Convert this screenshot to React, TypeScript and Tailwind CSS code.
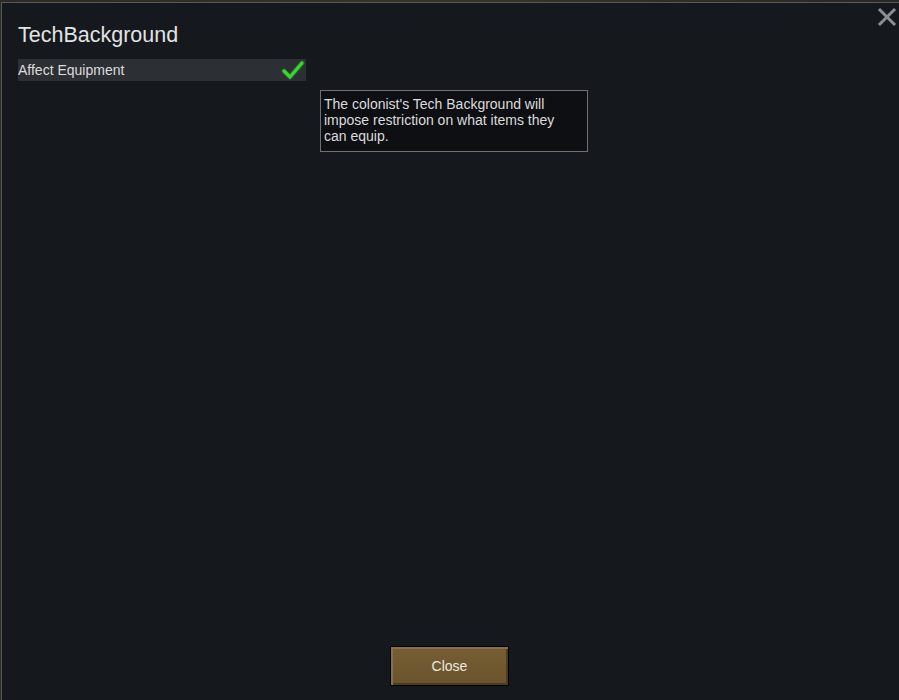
import React from 'react';

function CheckMark() {
  return (
    <svg width="24" height="20" viewBox="0 0 24 20" className="shrink-0">
      <path d="M3 11 L9 17 L21 3" fill="none" stroke="#1c6a1c" strokeWidth="5" strokeLinecap="round" strokeLinejoin="round" />
      <path d="M3 11 L9 17 L21 3" fill="none" stroke="#3fd13a" strokeWidth="3.2" strokeLinecap="round" strokeLinejoin="round" />
    </svg>
  );
}

function CloseX() {
  return (
    <svg width="20" height="20" viewBox="0 0 20 20">
      <path d="M3 3 L17 17 M17 3 L3 17" stroke="#8b8e92" strokeWidth="3" strokeLinecap="square" />
    </svg>
  );
}

export default function App() {
  return (
    <div
      className="w-[899px] h-[700px] overflow-hidden bg-gradient-to-r from-[#2c2a22] via-[#3a3427] to-[#2a2822] flex flex-col"
      style={{ fontFamily: '"Liberation Sans", Arial, sans-serif' }}
    >
      <div className="mt-[2px] ml-[1px] flex-1 flex flex-col bg-[#15181c] border-t border-l border-[#55585c] relative">
        <button className="absolute top-[4px] right-[2px] w-[20px] h-[20px]">
          <CloseX />
        </button>

        <div className="pl-[16px] pt-[18px] flex-1 flex flex-col">
          <h1 className="text-[21.5px] leading-[28px] text-[#e2e3e4] font-normal">TechBackground</h1>

          <div className="mt-[10px] flex items-start gap-[14px]">
            <div className="w-[288px] h-[22px] bg-[#2c2f33] flex items-center justify-between pr-[1px]">
              <span className="text-[14px] text-[#dcdcdc] leading-none">Affect Equipment</span>
              <CheckMark />
            </div>
            <div className="mt-[31px] w-[268px] h-[62px] bg-[#0d0f12] border border-[#6e7276] pl-[3px] pr-[24px] pt-[5px] text-[14px] leading-[16px] text-[#dcdcdc]">
              The colonist's Tech Background will impose restriction on what items they can equip.
            </div>
          </div>
        </div>

        <div className="flex justify-center pb-[14px] pr-[2px]">
          <button className="w-[119px] h-[40px] bg-gradient-to-b from-[#765d33] to-[#6a542d] border border-black shadow-[inset_2px_2px_0_#8a7045,inset_-2px_-2px_0_#4d3d20] text-[14px] text-[#ece8e0]">
            Close
          </button>
        </div>
      </div>
    </div>
  );
}
